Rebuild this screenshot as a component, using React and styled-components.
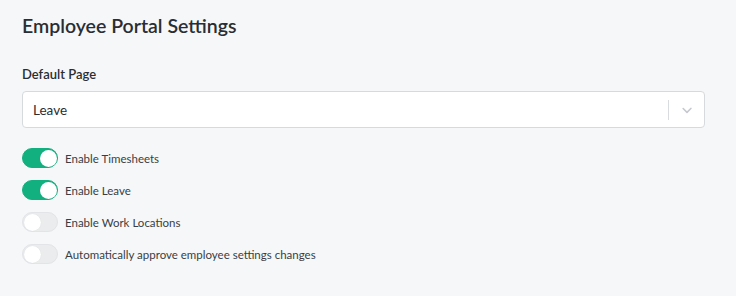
import React from "react";
import styled, { createGlobalStyle } from "styled-components";

const Global = createGlobalStyle`
  html, body { margin: 0; padding: 0; background: #f5f7f9; }
  body { font-family: Lato, "Noto Sans", sans-serif; color: #2b2f33; }
`;

const Page = styled.div`
  width: 736px;
  height: 296px;
  box-sizing: border-box;
  padding: 13px 31px 0 22px;
  background: #f5f7f9;
`;

const Title = styled.h2`
  margin: 0;
  font-size: 19.5px;
  font-weight: 600;
  line-height: 25px;
  color: #2a2e33;
`;

const Field = styled.div`
  margin-top: 28px;
  display: flex;
  flex-direction: column;
`;

const Label = styled.label`
  font-size: 13px;
  font-weight: 600;
  line-height: 16px;
  color: #2a2e33;
  margin-bottom: 9px;
`;

const Select = styled.div`
  height: 37px;
  box-sizing: border-box;
  border: 1px solid #d7dadd;
  border-radius: 4px;
  background: #fff;
  display: flex;
  align-items: center;
`;

const Value = styled.div`
  flex: 1;
  padding-left: 10px;
  font-size: 13.5px;
  color: #2a2e33;
`;

const Sep = styled.span`
  width: 1px;
  height: 20px;
  background: #d9dcdf;
`;

const Indicator = styled.div`
  width: 35px;
  display: flex;
  justify-content: center;
  align-items: center;
  color: #c5c9cd;
`;

const Toggles = styled.div`
  margin-top: 20px;
  display: flex;
  flex-direction: column;
  gap: 12px;
`;

const Row = styled.div`
  display: flex;
  align-items: center;
  gap: 7px;
`;

const Track = styled.div`
  width: 36px;
  height: 20px;
  border-radius: 10px;
  box-sizing: border-box;
  background: ${(p) => (p.$on ? "#12b07f" : "#eaecee")};
  border: 1px solid ${(p) => (p.$on ? "#12b07f" : "#e2e4e7")};
  position: relative;
  flex-shrink: 0;
`;

const Knob = styled.span`
  position: absolute;
  top: 0.5px;
  left: ${(p) => (p.$on ? "16.5px" : "0.5px")};
  width: 17px;
  height: 17px;
  border-radius: 50%;
  background: #fff;
  box-shadow: 0 0 1px rgba(0,0,0,0.1);
`;

const RowLabel = styled.span`
  font-size: 11.5px;
  color: #3a3e43;
`;

const items = [
  ["Enable Timesheets", true],
  ["Enable Leave", true],
  ["Enable Work Locations", false],
  ["Automatically approve employee settings changes", false],
];

export default function App() {
  return (
    <Page>
      <Global />
      <Title>Employee Portal Settings</Title>
      <Field>
        <Label>Default Page</Label>
        <Select>
          <Value>Leave</Value>
          <Sep />
          <Indicator>
            <svg width="16" height="16" viewBox="0 0 20 20" fill="currentColor">
              <path d="M4.5 7.4a1 1 0 0 1 1.4 0L10 11.5l4.1-4.1a1 1 0 1 1 1.4 1.4l-4.8 4.8a1 1 0 0 1-1.4 0L4.5 8.8a1 1 0 0 1 0-1.4z" />
            </svg>
          </Indicator>
        </Select>
      </Field>
      <Toggles>
        {items.map(([t, on]) => (
          <Row key={t}>
            <Track $on={on}><Knob $on={on} /></Track>
            <RowLabel>{t}</RowLabel>
          </Row>
        ))}
      </Toggles>
    </Page>
  );
}
